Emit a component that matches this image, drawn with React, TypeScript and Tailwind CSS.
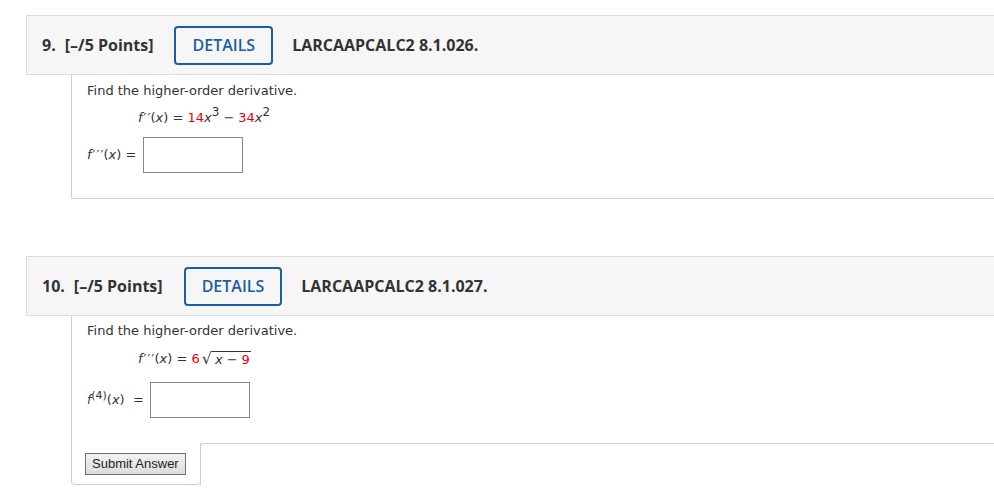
import React from "react";

const math = { fontFamily: '"DejaVu Sans", Verdana, sans-serif' };

function Header({ num, code }: { num: string; code: string }) {
  return (
    <div
      className="flex h-[60px] items-center border border-[#dcdcdc] bg-[#f6f6f6] pl-[15px] text-[16px] font-bold text-[#333]"
      style={{ fontFamily: '"Open Sans", sans-serif' }}
    >
      <span>{num}</span>
      <span className="ml-[9px]">[–/5 Points]</span>
      <button className="ml-[21px] h-[39px] rounded-[4px] border-2 border-[#1b5f9f] px-[16px] text-[16px] font-semibold text-[#1b5f9f]">
        DETAILS
      </button>
      <span className="ml-[19px]">{code}</span>
    </div>
  );
}

function Red({ children }: { children: React.ReactNode }) {
  return <span className="text-[#e4000f]">{children}</span>;
}

function Primes({ n }: { n: number }) {
  return <span className="-mr-[1px] ml-[1px] tracking-[1px]">{"′".repeat(n)}</span>;
}

function Minus() {
  return <span className="px-[4px]">−</span>;
}

function AnswerBox({ className = "" }: { className?: string }) {
  return <div className={"h-[36px] w-[100px] border border-[#888] bg-white " + className} />;
}

export default function App() {
  return (
    <div className="h-[496px] w-[994px] overflow-hidden bg-white pl-[26px] pt-[15px] text-[#333]">
      <div className="w-[990px]">
        {/* Question 9 */}
        <Header num="9." code="LARCAAPCALC2 8.1.026." />
        <div className="ml-[45px] h-[124px] border-b border-l border-[#cfcfcf] pl-[15px] pt-[7px] text-[13px]" style={math}>
          <div className="leading-[18px]">Find the higher-order derivative.</div>
          <div className="mt-[9px] whitespace-pre pl-[51px] leading-[18px]">
            <i>f</i>
            <Primes n={2} />
            {"("}
            <i>x</i>
            {") = "}
            <Red>14</Red>
            <i>x</i>
            <sup className="text-[12px]">3</sup>
            <Minus />
            <Red>34</Red>
            <i>x</i>
            <sup className="text-[12px]">2</sup>
          </div>
          <div className="mt-[10px] flex items-center">
            <span className="whitespace-pre text-[13px]">
              <i>f</i>
              <Primes n={3} />
              {"("}
              <i>x</i>
              {") ="}
            </span>
            <AnswerBox className="ml-[7px]" />
          </div>
        </div>

        {/* Question 10 */}
        <div className="mt-[57px]">
          <Header num="10." code="LARCAAPCALC2 8.1.027." />
        </div>
        <div className="ml-[45px] flex flex-col text-[13px]" style={math}>
          <div className="h-[127px] border-l border-[#cfcfcf] pl-[15px] pt-[6px]">
            <div className="leading-[18px]">Find the higher-order derivative.</div>
            <div className="mt-[10px] flex items-end pl-[51px] leading-[18px]">
              <span className="whitespace-pre">
                <i>f</i>
                <Primes n={3} />
                {"("}
                <i>x</i>
                {") = "}
                <Red>6</Red>
              </span>
              <span className="ml-[2px] text-[16px] leading-[18px]">√</span>
              <span className="whitespace-pre border-t border-[#333] pl-[3px] pr-[1px] leading-[16px]">
                <i>x</i>
                <Minus />
                <Red>9</Red>
              </span>
            </div>
            <div className="mt-[14px] flex items-center">
              <span className="whitespace-pre text-[13px]">
                <i className="text-[12px]">f</i>
                <sup className="text-[11px]">(4)</sup>(<i>x</i>
                {")  ="}
              </span>
              <AnswerBox className="ml-[6px]" />
            </div>
          </div>
          <div className="flex">
            <div className="h-[42px] w-[130px] rounded-b-[4px] border-b border-l border-r border-[#cfcfcf] pl-[13px] pt-[10px]">
              <button
                className="h-[22px] border border-[#707070] bg-gradient-to-b from-[#f2f2f2] to-[#dcdcdc] px-[6px] text-[13px] leading-[18px] text-[#222]"
                style={{ fontFamily: '"Liberation Sans", Arial, sans-serif' }}
              >
                Submit Answer
              </button>
            </div>
            <div className="-ml-px h-[42px] flex-1 rounded-tl-[4px] border-l border-t border-[#cfcfcf]" />
          </div>
        </div>
      </div>
    </div>
  );
}
